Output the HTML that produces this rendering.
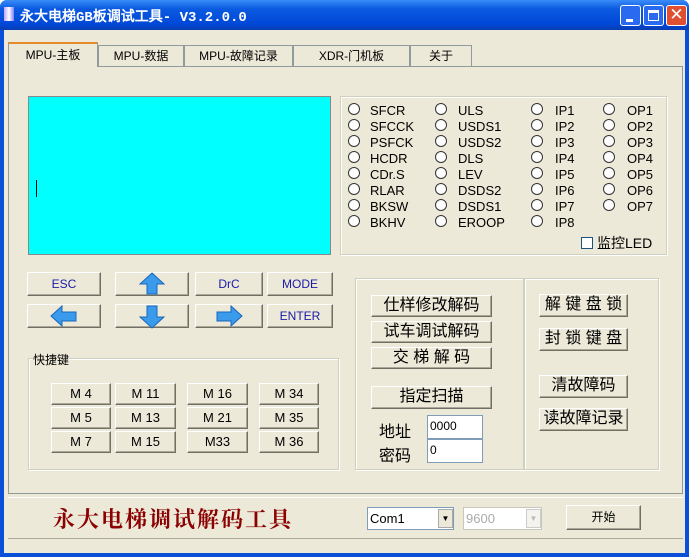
<!DOCTYPE html><html><head><meta charset="utf-8"><style>
*{box-sizing:border-box;margin:0;padding:0}
body{width:693px;height:557px;background:#fff;position:relative;overflow:hidden;font-family:"Liberation Sans","WenQuanYi Zen Hei",sans-serif;font-size:12px}
.a{position:absolute}
.win{left:0;top:0;width:689px;height:557px;background:#0a4fd8;border-radius:7px 7px 0 0}
.title{left:0;top:0;width:689px;height:30px;background:linear-gradient(#3a8cf8,#0a5ae0 30%,#0048d8 80%,#0a3cb0);border-radius:7px 7px 0 0}
.body{left:4px;top:30px;width:681px;height:523px;background:#ece9d8}
.btn{position:absolute;background:#ece9d8;border:1px solid;border-color:#fff #716f64 #716f64 #fff;box-shadow:inset -1px -1px 0 #aca899;text-align:center;color:#000}
.grp{position:absolute;border:1px solid #d0d0bf;box-shadow:1px 1px 0 #fff inset, 1px 1px 0 #fff}
.tb{position:absolute;top:45px;height:21px;border:1px solid #919b9c;border-bottom:none;background:#ece9d8;font-size:12px;line-height:20px;text-align:center}
.led{position:absolute;width:12px;height:12px;border:1px solid #333;border-radius:50%;background:#fff}
.lt{position:absolute;font-size:13px;color:#000}
.k{color:#1a1aa8;font-size:12px}
.cb{font-size:16px;line-height:20px}
.inp{position:absolute;background:#fff;border:1px solid;border-color:#7f9db9}
</style></head><body>
<div class="a win"></div>
<div class="a title"></div>
<div class="a" style="left:4px;top:7px;width:10px;height:14px;background:linear-gradient(90deg,#c0a0ff,#fff,#8080ff)"></div>
<div class="a" style="left:20px;top:6px;color:#fff;font-weight:bold;font-size:14px;font-family:'WenQuanYi Zen Hei','Liberation Mono',monospace">永大电梯GB板调试工具- V3.2.0.0</div>
<div class="a" style="left:620px;top:5px;width:21px;height:21px;border:1px solid #fff;border-radius:3px;background:#2a6af0"><div class="a" style="left:5px;top:13px;width:7px;height:3px;background:#fff"></div></div>
<div class="a" style="left:643px;top:5px;width:21px;height:21px;border:1px solid #fff;border-radius:3px;background:#2a6af0"><div class="a" style="left:4px;top:4px;width:11px;height:11px;border:1px solid #fff;border-top:3px solid #fff"></div></div>
<div class="a" style="left:666px;top:5px;width:21px;height:21px;border:1px solid #fff;border-radius:3px;background:#e05030;color:#fff;font-size:17px;line-height:18px;text-align:center">✕</div>
<div class="a body"></div>
<div class="a" style="left:8px;top:66px;width:675px;height:428px;border:1px solid #919b9c;background:#ece9d8"></div>
<div class="tb" style="left:8px;top:42px;width:90px;height:25px;background:#ece9d8;border-top:2px solid #e68b2c;line-height:22px">MPU-主板</div>
<div class="tb" style="left:98px;width:86px">MPU-数据</div>
<div class="tb" style="left:184px;width:109px">MPU-故障记录</div>
<div class="tb" style="left:293px;width:117px">XDR-门机板</div>
<div class="tb" style="left:410px;width:62px">关于</div>
<div class="a" style="left:28px;top:96px;width:303px;height:159px;background:#00ffff;border:1px solid #888"></div>
<div class="a" style="left:36px;top:180px;width:1px;height:17px;background:#000"></div>
<div class="grp" style="left:340px;top:96px;width:327px;height:159px"></div>
<div class="a" style="left:348px;top:103px">
<div class="led" style="left:0;top:0"></div><div class="led" style="left:0;top:16px"></div><div class="led" style="left:0;top:32px"></div><div class="led" style="left:0;top:48px"></div><div class="led" style="left:0;top:64px"></div><div class="led" style="left:0;top:80px"></div><div class="led" style="left:0;top:96px"></div><div class="led" style="left:0;top:112px"></div>
<div class="led" style="left:87px;top:0"></div><div class="led" style="left:87px;top:16px"></div><div class="led" style="left:87px;top:32px"></div><div class="led" style="left:87px;top:48px"></div><div class="led" style="left:87px;top:64px"></div><div class="led" style="left:87px;top:80px"></div><div class="led" style="left:87px;top:96px"></div><div class="led" style="left:87px;top:112px"></div>
<div class="led" style="left:183px;top:0"></div><div class="led" style="left:183px;top:16px"></div><div class="led" style="left:183px;top:32px"></div><div class="led" style="left:183px;top:48px"></div><div class="led" style="left:183px;top:64px"></div><div class="led" style="left:183px;top:80px"></div><div class="led" style="left:183px;top:96px"></div><div class="led" style="left:183px;top:112px"></div>
<div class="led" style="left:255px;top:0"></div><div class="led" style="left:255px;top:16px"></div><div class="led" style="left:255px;top:32px"></div><div class="led" style="left:255px;top:48px"></div><div class="led" style="left:255px;top:64px"></div><div class="led" style="left:255px;top:80px"></div><div class="led" style="left:255px;top:96px"></div>
<div class="lt" style="left:22px;top:0;line-height:16px">SFCR<br>SFCCK<br>PSFCK<br>HCDR<br>CDr.S<br>RLAR<br>BKSW<br>BKHV</div>
<div class="lt" style="left:110px;top:0;line-height:16px">ULS<br>USDS1<br>USDS2<br>DLS<br>LEV<br>DSDS2<br>DSDS1<br>EROOP</div>
<div class="lt" style="left:207px;top:0;line-height:16px">IP1<br>IP2<br>IP3<br>IP4<br>IP5<br>IP6<br>IP7<br>IP8</div>
<div class="lt" style="left:279px;top:0;line-height:16px">OP1<br>OP2<br>OP3<br>OP4<br>OP5<br>OP6<br>OP7</div>
</div>
<div class="a" style="left:581px;top:237px;width:12px;height:12px;border:1px solid #1c5180;background:#fff"></div>
<div class="a" style="left:597px;top:233px;font-size:14px">监控LED</div>
<div class="btn k" style="left:27px;top:272px;width:74px;height:24px;line-height:22px">ESC</div>
<div class="btn" style="left:115px;top:272px;width:74px;height:24px"><svg width="26" height="24" style="margin-top:-1px"><path d="M13 1 L25 12 H18 V22 H8 V12 H1 Z" fill="#3a9aec" stroke="#1a66b8"/></svg></div>
<div class="btn k" style="left:195px;top:272px;width:68px;height:24px;line-height:22px">DrC</div>
<div class="btn k" style="left:267px;top:272px;width:66px;height:24px;line-height:22px">MODE</div>
<div class="btn" style="left:27px;top:304px;width:74px;height:24px"><svg width="28" height="22"><path d="M1 11 L12 1 V7 H26 V16 H12 V21 Z" fill="#3a9aec" stroke="#1a66b8"/></svg></div>
<div class="btn" style="left:115px;top:304px;width:74px;height:24px"><svg width="26" height="24"><path d="M13 23 L25 12 H18 V1 H8 V12 H1 Z" fill="#3a9aec" stroke="#1a66b8"/></svg></div>
<div class="btn" style="left:195px;top:304px;width:68px;height:24px"><svg width="28" height="22"><path d="M27 11 L16 1 V7 H2 V16 H16 V21 Z" fill="#3a9aec" stroke="#1a66b8"/></svg></div>
<div class="btn k" style="left:267px;top:304px;width:66px;height:24px;line-height:22px">ENTER</div>
<div class="grp" style="left:28px;top:358px;width:311px;height:112px"></div>
<div class="a" style="left:33px;top:351px;background:#ece9d8;font-size:12px">快捷键</div>
<div class="btn" style="left:51px;top:383px;width:60px;height:22px;line-height:20px;font-size:13px">M 4</div>
<div class="btn" style="left:115px;top:383px;width:61px;height:22px;line-height:20px;font-size:13px">M 11</div>
<div class="btn" style="left:187px;top:383px;width:61px;height:22px;line-height:20px;font-size:13px">M 16</div>
<div class="btn" style="left:259px;top:383px;width:60px;height:22px;line-height:20px;font-size:13px">M 34</div>
<div class="btn" style="left:51px;top:407px;width:60px;height:22px;line-height:20px;font-size:13px">M 5</div>
<div class="btn" style="left:115px;top:407px;width:61px;height:22px;line-height:20px;font-size:13px">M 13</div>
<div class="btn" style="left:187px;top:407px;width:61px;height:22px;line-height:20px;font-size:13px">M 21</div>
<div class="btn" style="left:259px;top:407px;width:60px;height:22px;line-height:20px;font-size:13px">M 35</div>
<div class="btn" style="left:51px;top:431px;width:60px;height:22px;line-height:20px;font-size:13px">M 7</div>
<div class="btn" style="left:115px;top:431px;width:61px;height:22px;line-height:20px;font-size:13px">M 15</div>
<div class="btn" style="left:187px;top:431px;width:61px;height:22px;line-height:20px;font-size:13px">M33</div>
<div class="btn" style="left:259px;top:431px;width:60px;height:22px;line-height:20px;font-size:13px">M 36</div>
<div class="grp" style="left:355px;top:278px;width:169px;height:192px"></div>
<div class="grp" style="left:524px;top:278px;width:135px;height:192px"></div>
<div class="btn cb" style="left:371px;top:295px;width:121px;height:22px">仕样修改解码</div>
<div class="btn cb" style="left:371px;top:321px;width:121px;height:22px">试车调试解码</div>
<div class="btn cb" style="left:371px;top:347px;width:121px;height:22px">交 梯 解 码</div>
<div class="btn cb" style="left:371px;top:386px;width:121px;height:23px">指定扫描</div>
<div class="a" style="left:379px;top:421px;font-size:16px;line-height:24px">地址<br>密码</div>
<div class="inp" style="left:427px;top:415px;width:56px;height:24px;padding:3px 2px;font-size:12px">0000</div>
<div class="inp" style="left:427px;top:439px;width:56px;height:24px;padding:3px 2px;font-size:12px">0</div>
<div class="btn cb" style="left:539px;top:294px;width:89px;height:23px">解 键 盘 锁</div>
<div class="btn cb" style="left:539px;top:328px;width:89px;height:23px">封 锁 键 盘</div>
<div class="btn cb" style="left:539px;top:375px;width:89px;height:23px">清故障码</div>
<div class="btn cb" style="left:539px;top:408px;width:89px;height:23px">读故障记录</div>
<div class="a" style="left:8px;top:497px;width:675px;height:42px;border-top:1px solid #fff;border-bottom:1px solid #aca899"></div>
<div class="a" style="left:53px;top:503px;color:#8b0000;font-size:22px;font-weight:bold;letter-spacing:2px;font-family:'Noto Serif CJK SC',serif">永大电梯调试解码工具</div>
<div class="inp" style="left:367px;top:507px;width:87px;height:23px;padding:3px 2px;font-size:13px">Com1<div class="a" style="left:70px;top:1px;width:15px;height:19px;background:#ece9d8;border:1px solid #aaa;font-size:8px;text-align:center;line-height:18px">▼</div></div>
<div class="inp" style="left:463px;top:507px;width:79px;height:23px;padding:3px 2px;font-size:13px;color:#aaa;border-color:#c9c7ba">9600<div class="a" style="left:62px;top:1px;width:15px;height:19px;background:#f4f3ee;border:1px solid #ccc;font-size:8px;text-align:center;line-height:18px;color:#bbb">▼</div></div>
<div class="btn" style="left:566px;top:505px;width:75px;height:25px;line-height:23px;font-size:12px">开始</div>
</body></html>
